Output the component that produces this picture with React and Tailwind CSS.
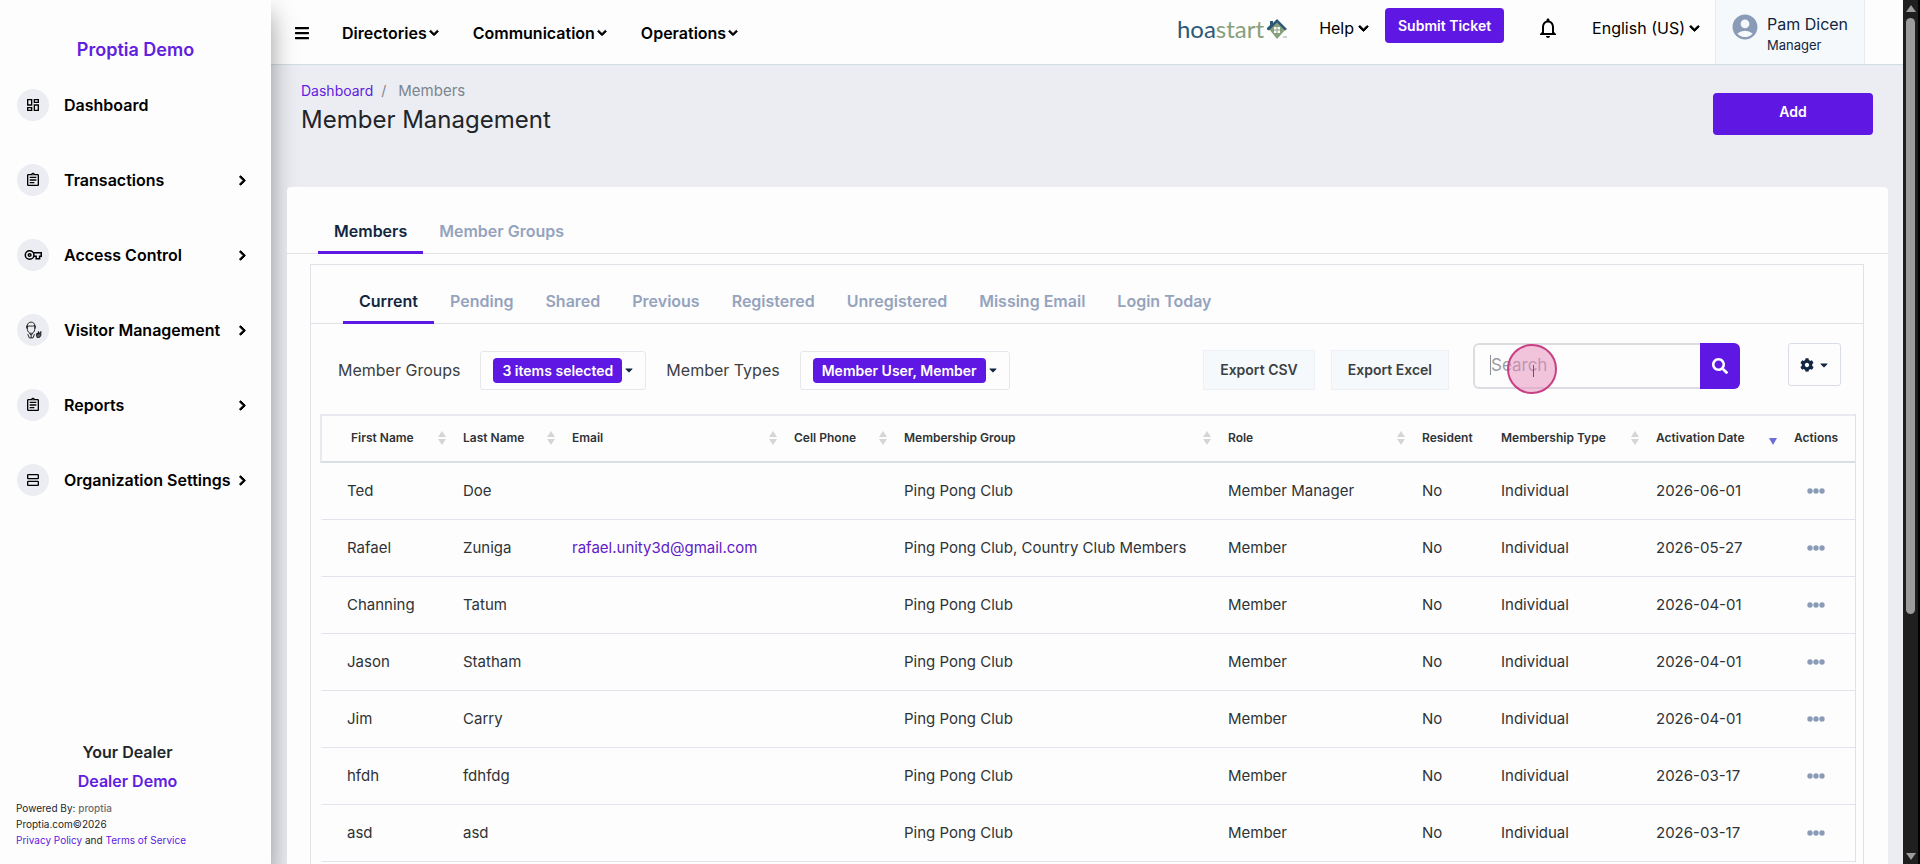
import React, { useState } from 'react'
import { FaBars, FaChevronDown, FaChevronRight, FaSearch, FaCog, FaCaretDown } from 'react-icons/fa'
import { MdOutlineDashboard, MdOutlineAssignment, MdOutlineNotifications, MdAccountCircle, MdOutlineViewAgenda } from 'react-icons/md'

const members = [
  { first: 'Ted', last: 'Doe', email: '', group: 'Ping Pong Club', role: 'Member Manager', date: '2026-06-01' },
  { first: 'Rafael', last: 'Zuniga', email: 'rafael.unity3d@gmail.com', group: 'Ping Pong Club, Country Club Members', role: 'Member', date: '2026-05-27' },
  { first: 'Channing', last: 'Tatum', email: '', group: 'Ping Pong Club', role: 'Member', date: '2026-04-01' },
  { first: 'Jason', last: 'Statham', email: '', group: 'Ping Pong Club', role: 'Member', date: '2026-04-01' },
  { first: 'Jim', last: 'Carry', email: '', group: 'Ping Pong Club', role: 'Member', date: '2026-04-01' },
  { first: 'hfdh', last: 'fdhfdg', email: '', group: 'Ping Pong Club', role: 'Member', date: '2026-03-17' },
  { first: 'asd', last: 'asd', email: '', group: 'Ping Pong Club', role: 'Member', date: '2026-03-17' },
]

const columns = [
  { title: 'First Name', width: 'w-[131px]', sort: 'both' },
  { title: 'Last Name', width: 'w-[109px]', sort: 'both' },
  { title: 'Email', width: 'w-[222px]', sort: 'both' },
  { title: 'Cell Phone', width: 'w-[110px]', sort: 'both' },
  { title: 'Membership Group', width: 'w-[324px]', sort: 'both' },
  { title: 'Role', width: 'w-[194px]', sort: 'both' },
  { title: 'Resident', width: 'w-[79px]', sort: '' },
  { title: 'Membership Type', width: 'w-[155px]', sort: 'both' },
  { title: 'Activation Date', width: 'w-[138px]', sort: 'down' },
  { title: 'Actions', width: 'w-[73px]', sort: '' },
]

const KeyIcon = () => (
  <svg width="18" height="18" viewBox="0 0 24 24" fill="none" stroke="currentColor" strokeWidth="2">
    <circle cx="7.5" cy="12" r="5.8" />
    <circle cx="7.5" cy="12" r="1.8" />
    <path d="M12.5 9H23v4.5h-2.2V17h-4.6v-3.5h-3.4" />
  </svg>
)

const VisitorIcon = () => (
  <svg width="18" height="18" viewBox="0 0 24 24" fill="none" stroke="currentColor" strokeWidth="1.1">
    <path d="M4.500 5.500C5 3 7 1.500 9.500 1.500c3 0 4.800 2 4.800 4.500v5c0 3-2 5.500-4.600 5.500-3 0-5-2.500-5.200-5.500z" />
    <path d="M4.500 7.500c3-2.200 5.500.8 9.800-1.500M3.500 6v4M15 6v4" />
    <path d="M5 17.500l2 5h5l2-5M9.500 18.500l-2.500-2M9.500 18.500l2.500-2M9.500 18.500v4" />
    <path d="M17.500 22c-1-2.500-1-4.500 0-6l1 2 .8-4 1 3 2.200-3v4.500c0 2-1.700 3.500-3.200 3.500z" fill="currentColor" fillOpacity="0.6" />
  </svg>
)

const Chevron = ({ size }) => <FaChevronDown size={size} stroke="currentColor" strokeWidth={45} className="overflow-visible" />

const menuItems = [
  { label: 'Dashboard', icon: <MdOutlineDashboard size={16} />, more: false },
  { label: 'Transactions', icon: <MdOutlineAssignment size={16} />, more: true },
  { label: 'Access Control', icon: <KeyIcon />, more: true },
  { label: 'Visitor Management', icon: <VisitorIcon />, more: true },
  { label: 'Reports', icon: <MdOutlineAssignment size={16} />, more: true },
  { label: 'Organization Settings', icon: <MdOutlineViewAgenda size={16} />, more: true },
]

const Sidebar = () => (
  <aside className="relative flex w-[271px] shrink-0 flex-col bg-[#fdfdfd] shadow-[0_14px_24px_0_rgba(0,0,0,0.4)]">
    <a href="#" className="pt-9 text-center text-lg font-semibold text-[#6020e0]">Proptia Demo</a>
    <nav className="flex flex-col gap-[43px] pt-[25px] pl-[17px]">
      {menuItems.map((item) => (
        <a href="#" key={item.label} className="flex h-8 items-center text-black">
          <span className="flex size-8 items-center justify-center rounded-full bg-[#ebedf2]">{item.icon}</span>
          <span className="ml-[15px] w-[173px] font-semibold whitespace-nowrap">{item.label}</span>
          {item.more && <FaChevronRight size={11} stroke="currentColor" strokeWidth={45} className="overflow-visible" />}
        </a>
      ))}
    </nav>
    <div className="mt-auto px-4 pb-4 text-[10px] leading-4 text-[#212529]">
      <div className="mr-4 mb-[7px] flex flex-col items-center gap-[5px] text-base font-semibold">
        <span>Your Dealer</span>
        <a href="#" className="text-[#6020e0]">Dealer Demo</a>
      </div>
      <p>Powered By: <span className="font-medium text-[#6c6c70]">proptia</span></p>
      <p>Proptia.com©2026</p>
      <p>
        <a href="#" className="text-[#6020e0]">Privacy Policy</a> and <a href="#" className="text-[#6020e0]">Terms of Service</a>
      </p>
    </div>
  </aside>
)

const Logo = () => (
  <a href="#" className="flex items-center gap-0.5 font-[Lato,sans-serif] text-2xl leading-6">
    <span className="text-[#86a07c]"><span className="text-[#2b5876]">hoa</span>start</span>
    <svg width="23" height="24" viewBox="92 0 23 24">
      <path d="M103 4l9 8-9 10-8-10z" fill="#86a07c" />
      <path d="M93 12.500V11l3-3V4h3v2l4-4 10 10-2 1.500-8-8-8 8z" fill="#2b5876" />
      <path d="M100 10h2.500v2.500H100zM103.500 10h2.500v2.500h-2.500zM100 13.500h2.500V16H100zM103.500 13.500h2.500V16h-2.500z" fill="#fdfdfd" />
      <path d="M109 20h4" stroke="#99aaaa" strokeWidth="1" />
    </svg>
  </a>
)

const Header = () => (
  <header className="flex h-[65px] shrink-0 border-b border-[#d3dce3] bg-[#fdfdfd] pl-[23px] text-black">
    <div className="flex items-center gap-8 pt-px">
      <button aria-label="Toggle menu"><FaBars size={16} /></button>
      <nav className="flex gap-[34px] font-semibold">
        <button className="flex items-center gap-0.5">Directories<Chevron size={10} /></button>
        <button className="flex items-center gap-0.5">Communication<Chevron size={10} /></button>
        <button className="flex items-center gap-0.5">Operations<Chevron size={10} /></button>
      </nav>
    </div>
    <div className="ml-auto flex items-start pt-2">
      <div className="flex h-[42px] items-center"><Logo /></div>
      <button className="ml-[30px] flex h-10 items-center gap-1">Help<Chevron size={11} /></button>
      <button className="ml-4 h-[35px] rounded bg-[#5f17e3] px-[13px] text-sm font-semibold text-white">Submit Ticket</button>
      <button aria-label="Notifications" className="ml-8 flex h-10 items-center"><MdOutlineNotifications size={24} /></button>
      <button className="ml-8 flex h-10 items-center gap-1">English (US)<Chevron size={11} /></button>
    </div>
    <div className="mr-[38px] ml-[15px] flex w-[150px] border-x border-[#e6ebf0] bg-[#f5f9fc] pt-3 pl-[14px] text-[#12263f]">
      <MdAccountCircle size={30} className="shrink-0 text-[#8a9bb8]" />
      <div className="ml-[7px]">
        <p className="leading-6">Pam Dicen</p>
        <p className="text-[13px] leading-[18px]">Manager</p>
      </div>
    </div>
  </header>
)

const Tabs = ({ names, active, onSelect, pad }) => (
  <div role="tablist" className={`flex border-b border-[#dfe2e7] ${pad}`}>
    {names.map((name) => (
      <button
        key={name}
        role="tab"
        aria-selected={name === active}
        onClick={() => onSelect(name)}
        className={
          name === active
            ? '-mb-px border-b-3 border-[#5f17e3] px-4 font-semibold text-[#12263f]'
            : '-mb-px border-b-3 border-transparent px-4 font-semibold text-[#95a3bd]'
        }
      >
        {name}
      </button>
    ))}
  </div>
)

const SortMark = ({ type }) => (
  <svg width="8" height="14" viewBox="0 0 8 14" className="shrink-0">
    {type === 'both' && <path d="M4 0l4 6H0zM4 14l4-6H0z" fill="#d5d5d8" />}
    {type === 'down' && <path d="M4 14l4-7H0z" fill="#6a6fd8" />}
  </svg>
)

const MultiSelect = ({ id, value }) => (
  <button id={id} className="flex h-[39px] items-center rounded-[3px] border border-[#e6e8ee] pr-[10px] pl-3">
    <span className="rounded bg-[#5f17e3] px-[9px] text-sm leading-[25px] font-semibold text-white">{value}</span>
    <FaCaretDown size={12} className="ml-px text-[#12263f]" />
  </button>
)

const Toolbar = () => (
  <div className="flex pt-[19px] pr-[22px] pl-[27px] text-[#3c4043]">
    <div className="flex h-[54px] items-center">
      <label htmlFor="groups" className="mr-5">Member Groups</label>
      <MultiSelect id="groups" value="3 items selected" />
      <label htmlFor="types" className="mr-5 ml-5">Member Types</label>
      <MultiSelect id="types" value="Member User, Member" />
    </div>
    <div className="ml-auto flex">
      <div className="flex h-[54px] items-center gap-4 text-sm font-semibold">
        <button className="h-10 border border-[#edf0f4] bg-[#f5f9fc] px-4">Export CSV</button>
        <button className="h-10 border border-[#edf0f4] bg-[#f5f9fc] px-4">Export Excel</button>
      </div>
      <form className="relative ml-6 flex h-[46px]">
        <input type="text" aria-label="Search" placeholder="Search" className="w-[227px] rounded-l-md border-2 border-r-0 border-[#dcdde0] pl-4 text-[17px] outline-none placeholder:text-[#9a9ea6]" />
        <button type="button" aria-label="Search" className="flex w-10 items-center justify-center rounded-r-md bg-[#5f17e3] text-white"><FaSearch size={16} /></button>
        {/* text caret and click highlight */}
        <span className="absolute top-3 left-[17px] h-5 w-px bg-[#8a8f99]" />
        <span className="absolute top-[1px] left-[34px] size-[50px] rounded-full border-2 border-[#c93f83] bg-[#e58bbb]/50" />
        <span className="absolute top-[22px] left-[60px] h-3 w-px bg-[#5c5c66]" />
      </form>
      <button aria-label="Table settings" className="ml-12 flex h-[43px] w-[53px] items-center justify-center gap-1 rounded-[3px] border border-[#d9dee4] text-[#12263f]">
        <FaCog size={14} />
        <FaCaretDown size={12} />
      </button>
    </div>
  </div>
)

const MembersTable = () => (
  <table className="mt-[17px] ml-[9px] w-[calc(100%-17px)] table-fixed border-separate border-spacing-0 border-r border-[#dfe2e7] text-left text-[#2f3337]">
    <thead>
      <tr>
        {columns.map((col, index) => (
          <th
            key={col.title}
            className={`${col.width} h-[49px] border-t-2 border-b-2 border-t-[#e8eaef] border-b-[#d8dfe5] pr-[5px] pb-0.5 text-xs font-semibold whitespace-nowrap ${index === 0 ? 'border-l-2 border-l-[#e8eaef] pl-[29px]' : 'pl-3'}`}
          >
            <div className="flex items-center justify-between">
              {col.title}
              {col.sort && <SortMark type={col.sort} />}
            </div>
          </th>
        ))}
      </tr>
    </thead>
    <tbody className="text-[15px] [&_td]:h-[57px] [&_td]:border-b [&_td]:border-b-[#e1e5eb] [&_td]:pl-3 [&_td]:whitespace-nowrap">
      {members.map((member, index) => (
        <tr key={index}>
          <td className="border-l-3 border-l-[#fdfdfd]"><span className="pl-3">{member.first}</span></td>
          <td>{member.last}</td>
          <td><a href="#" className="text-[#6020c8]">{member.email}</a></td>
          <td></td>
          <td>{member.group}</td>
          <td>{member.role}</td>
          <td>No</td>
          <td>Individual</td>
          <td>{member.date}</td>
          <td>
            <button aria-label="Row actions" className="ml-3 flex text-[#8a9bb8]">
              <svg width="20" height="6" viewBox="0 0 20 6" fill="currentColor">
                <circle cx="4" cy="3" r="2.7" />
                <circle cx="10" cy="3" r="2.7" />
                <circle cx="16" cy="3" r="2.7" />
              </svg>
            </button>
          </td>
        </tr>
      ))}
    </tbody>
  </table>
)

const Scrollbar = () => (
  <div className="flex w-[17px] shrink-0 flex-col items-center justify-between border-r-2 border-black bg-[#1f1f1f] py-1">
    <svg width="10" height="8" viewBox="0 0 10 8" fill="#9c9c9c"><path d="M5 1l5 7H0z" /></svg>
    <div className="mt-[6px] mb-auto h-[596px] w-[9px] rounded-full bg-[#9c9c9c]" />
    <svg width="10" height="8" viewBox="0 0 10 8" fill="#9c9c9c"><path d="M5 8l5-7H0z" /></svg>
  </div>
)

const App = () => {
  const [tab, setTab] = useState('Members')
  const [status, setStatus] = useState('Current')

  return (
    <div className="flex h-screen overflow-hidden bg-[#ebedf2] font-[Inter,sans-serif] text-base">
      <Sidebar />
      <div className="flex min-w-0 flex-1 flex-col">
        <Header />
        <div className="flex items-start justify-between pt-4 pr-[30px] pl-[30px]">
          <div>
            <nav className="flex gap-2 text-sm leading-5 text-[#7b8590]">
              <a href="#" className="text-[#6020e0]">Dashboard</a>
              <span>/</span>
              <span className="ml-1 text-[15px]">Members</span>
            </nav>
            <h1 className="text-2xl leading-[38px] text-[#212529]">Member Management</h1>
          </div>
          <button className="mt-3 h-[42px] w-40 rounded bg-[#5f17e3] pb-1 text-sm font-semibold text-white">Add</button>
        </div>
        <main className="relative z-10 mt-12 mr-[15px] ml-4 flex flex-1 flex-col rounded-t bg-[#fdfdfd]">
          <Tabs names={['Members', 'Member Groups']} active={tab} onSelect={setTab} pad="h-[67px] pt-6 pl-[31px]" />
          <div className="mt-[10px] mr-6 ml-[23px] flex-1 border border-b-0 border-[#dfe2e7]">
            <Tabs
              names={['Current', 'Pending', 'Shared', 'Previous', 'Registered', 'Unregistered', 'Missing Email', 'Login Today']}
              active={status}
              onSelect={setStatus}
              pad="h-[59px] pt-4 pl-8"
            />
            <Toolbar />
            <MembersTable />
          </div>
        </main>
      </div>
      <Scrollbar />
    </div>
  )
}

export default App
